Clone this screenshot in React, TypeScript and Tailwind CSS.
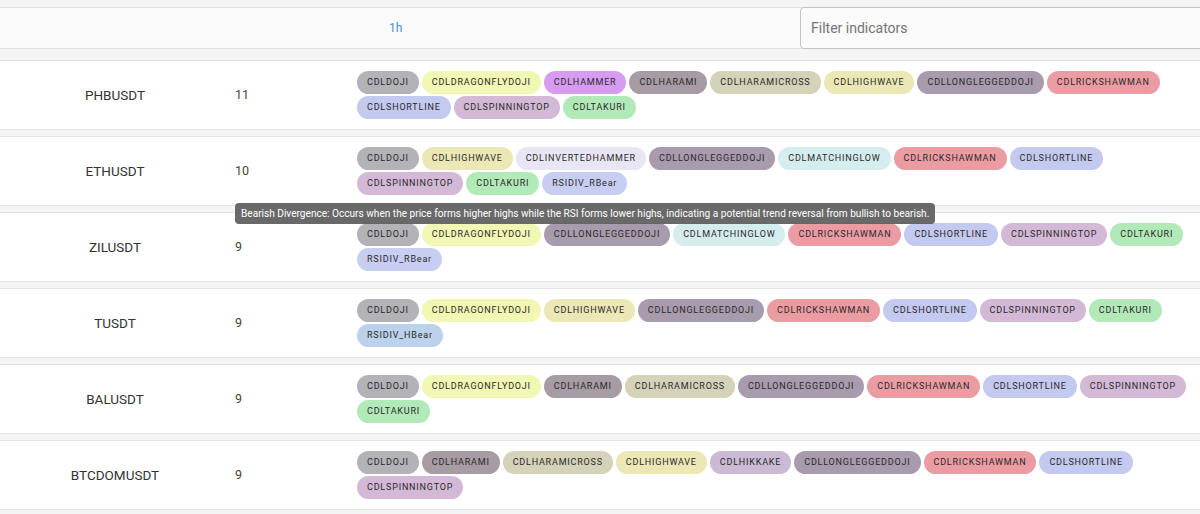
import React from "react";

const COLORS: Record<string, string> = {
  CDLDOJI: "bg-[#b2b2b7]",
  CDLDRAGONFLYDOJI: "bg-[#f3f7b4]",
  CDLHAMMER: "bg-[#d79cf1]",
  CDLHARAMI: "bg-[#a79ba4]",
  CDLHARAMICROSS: "bg-[#d4d2b8]",
  CDLHIGHWAVE: "bg-[#ebe8b6]",
  CDLLONGLEGGEDDOJI: "bg-[#a89bad]",
  CDLRICKSHAWMAN: "bg-[#eb9ca3]",
  CDLSHORTLINE: "bg-[#c4c9ef]",
  CDLSPINNINGTOP: "bg-[#d3b9d6]",
  CDLTAKURI: "bg-[#b2e9b8]",
  CDLINVERTEDHAMMER: "bg-[#e8e5f4]",
  CDLMATCHINGLOW: "bg-[#d5edef]",
  RSIDIV_RBear: "bg-[#c8cef1]",
  RSIDIV_HBear: "bg-[#bbd1ec]",
  CDLHIKKAKE: "bg-[#cabad4]",
};

type Row = { sym: string; count: number; lines: string[][] };

const ROWS: Row[] = [
  {
    sym: "PHBUSDT",
    count: 11,
    lines: [
      ["CDLDOJI", "CDLDRAGONFLYDOJI", "CDLHAMMER", "CDLHARAMI", "CDLHARAMICROSS", "CDLHIGHWAVE", "CDLLONGLEGGEDDOJI", "CDLRICKSHAWMAN"],
      ["CDLSHORTLINE", "CDLSPINNINGTOP", "CDLTAKURI"],
    ],
  },
  {
    sym: "ETHUSDT",
    count: 10,
    lines: [
      ["CDLDOJI", "CDLHIGHWAVE", "CDLINVERTEDHAMMER", "CDLLONGLEGGEDDOJI", "CDLMATCHINGLOW", "CDLRICKSHAWMAN", "CDLSHORTLINE"],
      ["CDLSPINNINGTOP", "CDLTAKURI", "RSIDIV_RBear"],
    ],
  },
  {
    sym: "ZILUSDT",
    count: 9,
    lines: [
      ["CDLDOJI", "CDLDRAGONFLYDOJI", "CDLLONGLEGGEDDOJI", "CDLMATCHINGLOW", "CDLRICKSHAWMAN", "CDLSHORTLINE", "CDLSPINNINGTOP", "CDLTAKURI"],
      ["RSIDIV_RBear"],
    ],
  },
  {
    sym: "TUSDT",
    count: 9,
    lines: [
      ["CDLDOJI", "CDLDRAGONFLYDOJI", "CDLHIGHWAVE", "CDLLONGLEGGEDDOJI", "CDLRICKSHAWMAN", "CDLSHORTLINE", "CDLSPINNINGTOP", "CDLTAKURI"],
      ["RSIDIV_HBear"],
    ],
  },
  {
    sym: "BALUSDT",
    count: 9,
    lines: [
      ["CDLDOJI", "CDLDRAGONFLYDOJI", "CDLHARAMI", "CDLHARAMICROSS", "CDLLONGLEGGEDDOJI", "CDLRICKSHAWMAN", "CDLSHORTLINE", "CDLSPINNINGTOP"],
      ["CDLTAKURI"],
    ],
  },
  {
    sym: "BTCDOMUSDT",
    count: 9,
    lines: [
      ["CDLDOJI", "CDLHARAMI", "CDLHARAMICROSS", "CDLHIGHWAVE", "CDLHIKKAKE", "CDLLONGLEGGEDDOJI", "CDLRICKSHAWMAN", "CDLSHORTLINE"],
      ["CDLSPINNINGTOP"],
    ],
  },
];

function Chip({ name }: { name: string }) {
  return (
    <span
      className={`${COLORS[name]} inline-flex h-[23px] items-center whitespace-nowrap rounded-full px-[10px] text-[9px] tracking-[0.8px] text-[#2a2a2a]`}
    >
      {name}
    </span>
  );
}

export default function App() {
  return (
    <div
      className="relative h-[514px] w-[1200px] overflow-hidden bg-[#f4f4f4] text-[#333]"
      style={{ fontFamily: "Roboto, 'Noto Sans', sans-serif" }}
    >
      {/* header */}
      <div className="mt-[7px] flex h-[42px] items-center border-y border-[#e2e2e2] bg-[#fafafa]">
        <div className="flex w-[800px] shrink-0 items-center pl-[389px] text-[12px] text-[#4a8fd6]">1h</div>
        <div className="flex h-[42px] w-[412px] shrink-0 items-center rounded-[4px] border border-[#c4c4c4] bg-[#fafafa] pl-[10px] text-[14px] text-[#757575]">
          Filter indicators
        </div>
      </div>

      {/* rows */}
      <div className="mt-[11px] flex flex-col gap-[6px]">
        {ROWS.map((r) => (
          <div
            key={r.sym}
            className="flex h-[70px] items-center border-y border-[#e4e4e4] bg-white"
          >
            <div className="w-[230px] shrink-0 text-center text-[13.5px] text-[#333]">{r.sym}</div>
            <div className="w-[127px] shrink-0 pl-[5px] text-[12.5px] text-[#444]">{r.count}</div>
            <div className="flex flex-col gap-[2px]">
              {r.lines.map((line, i) => (
                <div key={i} className="flex gap-[3px]">
                  {line.map((n) => (
                    <Chip key={n} name={n} />
                  ))}
                </div>
              ))}
            </div>
          </div>
        ))}
      </div>

      {/* tooltip */}
      <div className="absolute left-[235px] top-[203px] flex h-[21px] items-center whitespace-nowrap rounded-[4px] bg-[#616161]/95 px-[6px] text-[10.1px] text-white">
        Bearish Divergence: Occurs when the price forms higher highs while the RSI forms lower highs, indicating a potential trend reversal from bullish to bearish.
      </div>
    </div>
  );
}
